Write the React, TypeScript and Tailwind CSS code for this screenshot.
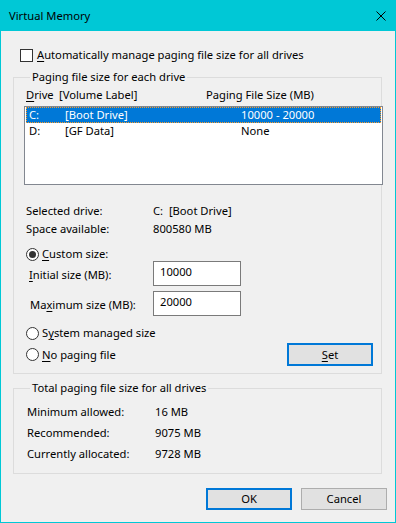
const font = "font-['Noto_Sans',sans-serif]";

function Checkbox() {
  return <span className="w-[13px] h-[13px] border border-[#333333] bg-white shrink-0" />;
}

function Radio({ checked }: { checked?: boolean }) {
  return (
    <span className="w-[13px] h-[13px] rounded-full border border-[#333333] bg-white shrink-0 flex items-center justify-center">
      {checked && <span className="w-[7px] h-[7px] rounded-full bg-[#333333]" />}
    </span>
  );
}

function Btn({ children, focused }: { children: React.ReactNode; focused?: boolean }) {
  return (
    <div
      className={
        focused
          ? 'w-[86px] h-[22px] border-2 border-[#0078d7] bg-[#e1e1e1] flex items-center justify-center'
          : 'w-[86px] h-[22px] border border-[#adadad] bg-[#e1e1e1] flex items-center justify-center'
      }
    >
      {children}
    </div>
  );
}

const drives = [
  { letter: 'C:', label: '[Boot Drive]', size: '10000 - 20000', selected: true },
  { letter: 'D:', label: '[GF Data]', size: 'None', selected: false },
];

const totals = [
  ['Minimum allowed:', '16 MB'],
  ['Recommended:', '9075 MB'],
  ['Currently allocated:', '9728 MB'],
];

export default function App() {
  return (
    <div className={`w-[396px] h-[523px] flex flex-col border-x border-b border-[#00c8d6] bg-[#f0f0f0] text-[11.2px] leading-[16px] text-black ${font}`}>
      <div className="h-[31px] shrink-0 bg-[#00c8d6] flex items-center justify-between pl-[8px] pr-[9px]">
        <span>Virtual Memory</span>
        <svg width="10" height="10" viewBox="0 0 10 10">
          <path d="M0.5 0.5 L9.5 9.5 M9.5 0.5 L0.5 9.5" stroke="#000" strokeWidth="1" />
        </svg>
      </div>

      <div className="flex flex-col pl-[12px]">
        <div className="mt-[16px] h-[16px] flex items-center pl-[7px]">
          <Checkbox />
          <span className="ml-[4px]">
            <u className="underline-offset-2">A</u>utomatically manage paging file size for all drives
          </span>
        </div>

        <fieldset className="mt-[6px] w-[369px] min-w-0 border border-[#dcdcdc] pl-[10px] pr-[8px] pb-[7px]">
          <legend className="ml-[6px] px-[2px]">Paging file size for each drive</legend>
          <div className="mt-[2px] flex pl-[2px]">
            <span className="w-[33px] shrink-0">
              <u className="underline-offset-2">D</u>rive
            </span>
            <span className="w-[147px] shrink-0">[Volume Label]</span>
            <span>Paging File Size (MB)</span>
          </div>
          <div className="mt-[3px] w-[359px] h-[79px] border border-[#828790] bg-white px-[1px]">
            {drives.map((d) => (
              <div
                key={d.letter}
                className={
                  d.selected
                    ? 'h-[16px] flex items-center pl-[3px] bg-[#0078d7] text-white outline-1 outline-dotted outline-[#ff9c27] -outline-offset-1'
                    : 'h-[16px] flex items-center pl-[3px]'
                }
              >
                <span className="w-[36px] shrink-0">{d.letter}</span>
                <span className="w-[176px] shrink-0">{d.label}</span>
                <span>{d.size}</span>
              </div>
            ))}
          </div>

          <div className="mt-[17px] flex pl-[2px] leading-[18px]">
            <span className="w-[127px] shrink-0">Selected drive:</span>
            <span className="whitespace-pre">C:  [Boot Drive]</span>
          </div>
          <div className="flex pl-[2px] leading-[18px]">
            <span className="w-[127px] shrink-0">Space available:</span>
            <span>800580 MB</span>
          </div>

          <div className="mt-[8px] h-[16px] flex items-center pl-[2px]">
            <Radio checked />
            <span className="ml-[3px]">
              <u className="underline-offset-2">C</u>ustom size:
            </span>
          </div>
          <div className="mt-[-1px] h-[25px] flex items-center pl-[5px]">
            <span className="w-[124px] shrink-0 pt-[2px]">
              <u className="underline-offset-2">I</u>nitial size (MB):
            </span>
            <div className="w-[88px] h-[25px] border border-[#7a7a7a] bg-white pl-[6px] pt-[2px]">10000</div>
          </div>
          <div className="mt-[5px] h-[25px] flex items-center pl-[6px]">
            <span className="w-[123px] shrink-0 pt-[2px]">
              Ma<u className="underline-offset-2">x</u>imum size (MB):
            </span>
            <div className="w-[88px] h-[25px] border border-[#7a7a7a] bg-white pl-[6px] pt-[2px]">20000</div>
          </div>

          <div className="mt-[9px] h-[16px] flex items-center pl-[2px]">
            <Radio />
            <span className="ml-[3px]">
              S<u className="underline-offset-2">y</u>stem managed size
            </span>
          </div>
          <div className="mt-[2px] h-[23px] flex items-center justify-between pl-[2px]">
            <div className="flex items-center">
              <Radio />
              <span className="ml-[3px]">
                <u className="underline-offset-2">N</u>o paging file
              </span>
            </div>
            <div className="w-[86px] h-[23px] border-2 border-[#0078d7] bg-[#e1e1e1] flex items-center justify-center">
              <span>
                <u className="underline-offset-2">S</u>et
              </span>
            </div>
          </div>
        </fieldset>

        <fieldset className="mt-[6px] w-[369px] min-w-0 border border-[#dcdcdc] pl-[10px] pb-[9px]">
          <legend className="ml-[6px] px-[2px]">Total paging file size for all drives</legend>
          <div className="mt-[5px] flex flex-col">
            {totals.map(([k, v]) => (
              <div key={k} className="h-[21px] flex items-center pl-[3px]">
                <span className="w-[128px] shrink-0">{k}</span>
                <span>{v}</span>
              </div>
            ))}
          </div>
        </fieldset>

        <div className="mt-[14px] w-[374px] flex justify-end gap-[9px]">
          <Btn focused>OK</Btn>
          <Btn>Cancel</Btn>
        </div>
      </div>
    </div>
  );
}
